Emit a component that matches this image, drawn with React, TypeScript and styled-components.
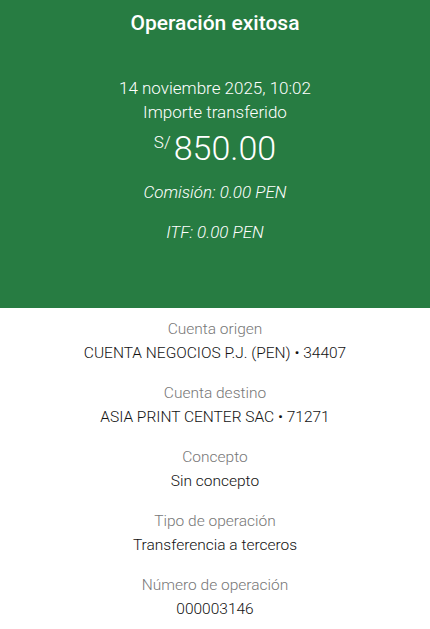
import styled, { createGlobalStyle } from 'styled-components';

const GlobalStyle = createGlobalStyle`
	body {
		margin: 0;
		background: #ffffff;
		font-family: Roboto, 'Liberation Sans', sans-serif;
	}
`;

const Page = styled.main`
	width: 430px;
	display: flex;
	flex-direction: column;
`;

const Header = styled.section`
	background: #277c42;
	color: #ffffff;
	height: 308px;
	box-sizing: border-box;
	padding-top: 11px;
	display: flex;
	flex-direction: column;
	align-items: center;
	text-align: center;
`;

const Title = styled.h1`
	margin: 0;
	font-size: 21px;
	line-height: 24px;
	font-weight: 500;
`;

const Line = styled.div`
	font-size: 17px;
	line-height: 24px;
	font-weight: 300;
`;

const DateLine = styled(Line)`
	margin-top: 41px;
`;

const Amount = styled.div`
	display: flex;
	align-items: flex-start;
	margin-top: 4px;
	font-weight: 300;
`;

const Currency = styled.span`
	font-size: 17px;
	line-height: 20px;
	margin-top: 4px;
	margin-right: 3px;
`;

const Value = styled.span`
	font-size: 34px;
	line-height: 40px;
`;

const Fee = styled(Line)`
	font-style: italic;
	margin-top: ${({ $gap }: { $gap: number }) => $gap}px;
`;

const Details = styled.section`
	padding-top: 9px;
	display: flex;
	flex-direction: column;
	gap: 16px;
	text-align: center;
`;

const Item = styled.div`
	display: flex;
	flex-direction: column;
`;

const Label = styled.span`
	color: #777777;
	font-size: 15.5px;
	line-height: 24px;
	font-weight: 300;
`;

const Text = styled.span`
	color: #121212;
	font-size: 15.5px;
	line-height: 24px;
	font-weight: 300;
`;

const details = [
	{ label: 'Cuenta origen', value: 'CUENTA NEGOCIOS P.J. (PEN) • 34407' },
	{ label: 'Cuenta destino', value: 'ASIA PRINT CENTER SAC • 71271' },
	{ label: 'Concepto', value: 'Sin concepto' },
	{ label: 'Tipo de operación', value: 'Transferencia a terceros' },
	{ label: 'Número de operación', value: '000003146' },
];

export default function App() {
	return (
		<Page>
			<GlobalStyle />
			<Header>
				<Title>Operación exitosa</Title>
				<DateLine>14 noviembre 2025, 10:02</DateLine>
				<Line>Importe transferido</Line>
				<Amount>
					<Currency>S/</Currency>
					<Value>850.00</Value>
				</Amount>
				<Fee $gap={12}>Comisión: 0.00 PEN</Fee>
				<Fee $gap={16}>ITF: 0.00 PEN</Fee>
			</Header>
			<Details>
				{details.map((d) => (
					<Item key={d.label}>
						<Label>{d.label}</Label>
						<Text>{d.value}</Text>
					</Item>
				))}
			</Details>
		</Page>
	);
}
